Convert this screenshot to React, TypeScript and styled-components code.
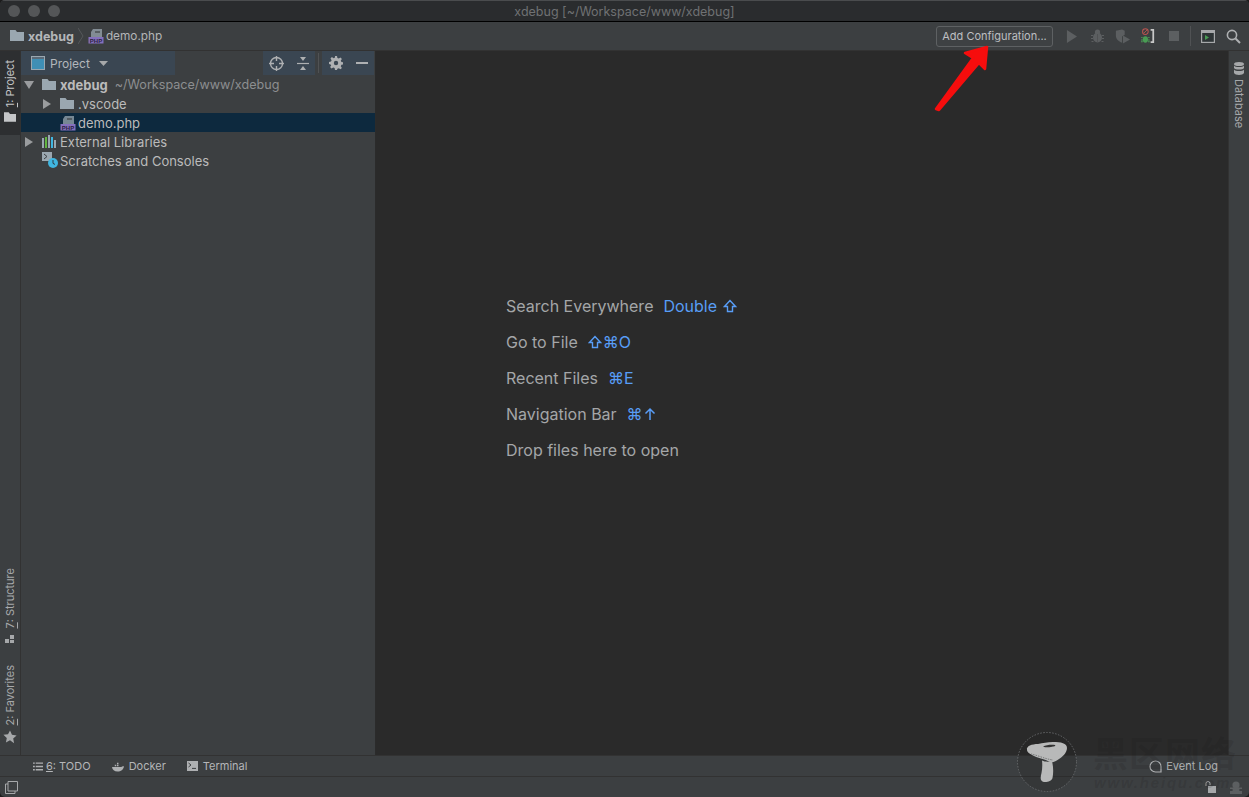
import React from "react"
import styled, { createGlobalStyle } from "styled-components"

const GlobalStyle = createGlobalStyle`
  html, body {
    margin: 0;
    padding: 0;
    height: 100%;
    background: #1c1c1c;
    overflow: hidden;
  }
  #root {
    height: 100%;
  }
`

const uiFont = `Inter, "Noto Sans", "Liberation Sans", sans-serif`

const Window = styled.div`
  position: relative;
  width: 1249px;
  height: 797px;
  display: flex;
  flex-direction: column;
  background: #3c3f41;
  color: #bbbbbb;
  font-family: ${uiFont};
  font-size: 13px;
  overflow: hidden;
  border-radius: 5px;
`

const TitleBar = styled.div`
  position: relative;
  height: 22px;
  flex: none;
  background: #2a2c2e;
  border-top: 1px solid #4a4c4e;
  border-bottom: 1px solid #000;
  box-sizing: border-box;
  display: flex;
  align-items: center;
  justify-content: center;
  color: #6f7173;
  font-size: 12.5px;
`

const Lights = styled.div`
  position: absolute;
  left: 8px;
  top: 4px;
  display: flex;
  gap: 8px;
`

const Light = styled.span`
  width: 12px;
  height: 12px;
  border-radius: 50%;
  background: #545658;
`

const NavBar = styled.div`
  height: 29px;
  box-sizing: border-box;
  flex: none;
  display: flex;
  align-items: center;
  padding-left: 10px;
  border-bottom: 1px solid #323232;
  svg {
    flex: none;
  }
`

const Crumb = styled.span<{ $bold?: boolean }>`
  font-weight: ${(p) => (p.$bold ? 700 : 400)};
  color: #b4b6b8;
  font-size: ${(p) => (p.$bold ? "12.5px" : "11.8px")};
  margin-left: ${(p) => (p.$bold ? "4px" : "2px")};
`

const CrumbChevron = styled.svg`
  margin: 0 4px;
`

const Spacer = styled.div`
  flex: 1;
`

const ConfigButton = styled.div`
  width: 117px;
  height: 21px;
  box-sizing: border-box;
  border: 1px solid #5e6163;
  border-radius: 3px;
  background: #3e4143;
  display: flex;
  align-items: center;
  justify-content: center;
  font-size: 11px;
  color: #bdbfc1;
  margin-right: 6px;
`

const ToolIcons = styled.div`
  display: flex;
  align-items: center;
  height: 100%;
  padding-right: 3px;
`

const ToolSlot = styled.span<{ $width?: number }>`
  width: ${(p) => p.$width ?? 25.5}px;
  flex: none;
  display: flex;
  align-items: center;
  justify-content: center;
`

const ToolDivider = styled.span`
  width: 1px;
  height: 20px;
  margin: 0 4px 0 3.5px;
  background: #505254;
`

const Main = styled.div`
  flex: 1;
  min-height: 0;
  display: flex;
`

const Stripe = styled.div<{ $side: "left" | "right" }>`
  width: 20px;
  flex: none;
  display: flex;
  flex-direction: column;
  border-${(p) => (p.$side === "left" ? "right" : "left")}: 1px solid #323232;
`

const StripeGap = styled.div`
  flex: 1;
`

const StripeTab = styled.div<{ $active?: boolean; $height: number; $down?: boolean; $pad: number }>`
  height: ${(p) => p.$height}px;
  display: flex;
  flex-direction: ${(p) => (p.$down ? "column" : "column-reverse")};
  align-items: center;
  justify-content: flex-start;
  gap: ${(p) => (p.$down ? 4 : 5)}px;
  padding: ${(p) => (p.$down ? `${p.$pad}px 0 0` : `0 0 ${p.$pad}px`)};
  box-sizing: border-box;
  background: ${(p) => (p.$active ? "#2d2f31" : "transparent")};
  color: ${(p) => (p.$active ? "#c4c6c8" : "#a6a8aa")};
  svg {
    flex: none;
  }
`

const StripeLabel = styled.span<{ $down?: boolean }>`
  writing-mode: vertical-rl;
  transform: ${(p) => (p.$down ? "none" : "rotate(180deg)")};
  font-size: 11px;
  white-space: nowrap;
  u {
    text-underline-offset: 1px;
  }
`

const ProjectPanel = styled.div`
  width: 354px;
  flex: none;
  display: flex;
  flex-direction: column;
  border-right: 1px solid #2b2b2b;
`

const PanelHeader = styled.div`
  height: 24px;
  flex: none;
  display: flex;
  align-items: stretch;
`

const PanelTitle = styled.div`
  width: 154px;
  background: #3a4652;
  display: flex;
  align-items: center;
  padding-left: 10px;
  box-sizing: border-box;
  gap: 5px;
  font-size: 12px;
  color: #b3b7bb;
`

const PanelActions = styled.div<{ $left: number }>`
  width: 52px;
  margin-left: ${(p) => p.$left}px;
  background: #3a4652;
  display: flex;
  align-items: center;
  justify-content: space-around;
`

const PanelDivider = styled.span`
  width: 1px;
  margin: 2px 3px;
  background: #505254;
`

const Tree = styled.div`
  display: flex;
  flex-direction: column;
`

const Row = styled.div<{ $indent: number; $selected?: boolean }>`
  height: 19px;
  display: flex;
  align-items: center;
  padding-left: ${(p) => p.$indent}px;
  background: ${(p) => (p.$selected ? "#0d293e" : "transparent")};
  color: #bbbbbb;
  white-space: nowrap;
  font-size: 13px;
`

const Arrow = styled.span`
  width: 18px;
  flex: none;
  display: flex;
  align-items: center;
`

const RowIcon = styled.span`
  width: 18px;
  height: 16px;
  flex: none;
  display: flex;
  align-items: center;
`

const RowPath = styled.span`
  color: #8c8e90;
  font-size: 12.6px;
  margin-left: 7px;
`

const Editor = styled.div`
  flex: 1;
  background: #2a2a2a;
  display: flex;
  flex-direction: column;
  padding: 245px 0 0 130px;
  box-sizing: border-box;
  gap: 16px;
`

const Hint = styled.div`
  display: flex;
  align-items: center;
  height: 20px;
  gap: 10px;
  font-size: 16px;
  color: #a4a6a8;
`

const Shortcut = styled.span`
  color: #589df6;
  display: inline-flex;
  align-items: center;
  gap: 1px;
`

const ToolBar = styled.div`
  height: 22px;
  flex: none;
  display: flex;
  align-items: center;
  padding-left: 33px;
  gap: 21px;
  border-top: 1px solid #323232;
  border-bottom: 1px solid #323232;
  box-sizing: border-box;
  font-size: 11px;
`

const ToolItem = styled.div<{ $gap?: number }>`
  display: flex;
  align-items: center;
  gap: ${(p) => p.$gap ?? 5}px;
  color: #b4b6b8;
  u {
    text-underline-offset: 1px;
  }
`

const EventLog = styled(ToolItem)`
  margin-left: auto;
  margin-right: 31px;
`

const StatusBar = styled.div`
  height: 20px;
  flex: none;
  display: flex;
  align-items: center;
  padding: 0 7px 0 5px;
  gap: 13px;
`

/* watermark and arrow sit over the page */
const Badge = styled.svg`
  position: absolute;
  left: 1016px;
  top: 731px;
`

const WatermarkCn = styled.div`
  position: absolute;
  left: 1093px;
  top: 731px;
  font-family: "Noto Sans CJK SC", sans-serif;
  font-weight: 700;
  font-size: 35px;
  line-height: 42px;
  letter-spacing: 1px;
  color: rgba(20, 20, 20, 0.14);
  white-space: nowrap;
`

const WatermarkUrl = styled.div`
  position: absolute;
  left: 1094px;
  top: 774px;
  font-family: "Liberation Sans", sans-serif;
  font-size: 15px;
  font-style: italic;
  font-weight: 700;
  letter-spacing: 1.8px;
  color: rgba(20, 20, 20, 0.14);
  white-space: nowrap;
`

const RedArrow = styled.svg`
  position: absolute;
  left: 930px;
  top: 42px;
`

const Folder = ({ size = 14 }: { size?: number }) => (
  <svg width={size} height={size * 0.8} viewBox="0 0 14 11">
    <path d="M0 0h5.5l1.5 2h7v9H0z" fill="#9aa7b0" />
  </svg>
)

const PhpFile = () => (
  <svg width="16" height="16" viewBox="0 0 16 16">
    <path d="M5 1h9v8H3V4z" fill="#9aa7b0" opacity=".75" />
    <path d="M7 3h5v2H7z" fill="#3c3f41" opacity=".6" />
    <rect x="0.5" y="9" width="15" height="6.5" fill="#8470bd" />
    <text x="8" y="14.6" textAnchor="middle" fontSize="6" fontWeight="700" fontFamily="Liberation Sans, sans-serif" fill="#2b2140">
      PHP
    </text>
  </svg>
)

const Triangle = ({ open }: { open?: boolean }) => (
  <svg width="10" height="10" viewBox="0 0 10 10">
    {open ? <path d="M0 1h10L5 9z" fill="#9a9c9e" /> : <path d="M1 0l8 5-8 5z" fill="#9a9c9e" />}
  </svg>
)

const Bug = ({ color }: { color: string }) => (
  <svg width="13" height="14" viewBox="0 0 13 14">
    <g fill={color}>
      <ellipse cx="6.5" cy="8.5" rx="4.5" ry="5" />
      <circle cx="6.5" cy="3" r="2.6" />
      <path d="M0 6h2v1H0zM11 6h2v1h-2zM0 9h2v1H0zM11 9h2v1h-2zM.5 12h2v1h-2zM10.500 12h2v1h-2z" />
    </g>
    <path d="M6.500 5v8" stroke="#4a4d4f" strokeWidth=".7" />
  </svg>
)

const ShiftGlyph = () => (
  <svg width="14" height="14" viewBox="0 0 14 14">
    <path d="M7 1.5L1.5 7.5H4.5V12.5H9.5V7.5H12.5z" fill="none" stroke="#589df6" strokeWidth="1.4" />
  </svg>
)

const UpGlyph = () => (
  <svg width="12" height="14" viewBox="0 0 12 14">
    <path d="M6 13V2M1.5 6.5L6 2l4.5 4.5" fill="none" stroke="#589df6" strokeWidth="1.5" />
  </svg>
)

export default function App() {
  return (
    <>
      <GlobalStyle />
      <Window>
        <TitleBar>
          <Lights>
            <Light />
            <Light />
            <Light />
          </Lights>
          xdebug [~/Workspace/www/xdebug]
        </TitleBar>
        <NavBar>
          <Folder />
          <Crumb $bold>xdebug</Crumb>
          <CrumbChevron width="6" height="16" viewBox="0 0 6 16">
            <path d="M0 0l5 8-5 8" fill="none" stroke="#55585a" />
          </CrumbChevron>
          <PhpFile />
          <Crumb>demo.php</Crumb>
          <Spacer />
          <ConfigButton>Add Configuration...</ConfigButton>
          <ToolIcons>
            <ToolSlot>
              <svg width="11" height="13" viewBox="0 0 12 14">
                <path d="M1 0l11 7-11 7z" fill="#5c5f61" />
              </svg>
            </ToolSlot>
            <ToolSlot>
              <Bug color="#5c5f61" />
            </ToolSlot>
            <ToolSlot>
              <svg width="15" height="15" viewBox="0 0 17 16">
                <path d="M1 1.5L8 0l3 1.5V6L8 8v7C4 14 1 11 1 7z" fill="#5c5f61" />
                <path d="M9 7l8 4.5-8 4.5z" fill="#5c5f61" />
              </svg>
            </ToolSlot>
            <ToolSlot>
              <svg width="14" height="16" viewBox="0 0 16 18">
                <circle cx="5" cy="4" r="3.2" fill="none" stroke="#b85450" strokeWidth="1.2" />
                <path d="M3 6l4-4" stroke="#b85450" strokeWidth="1" />
                <g fill="#499c54">
                  <ellipse cx="5" cy="13" rx="3" ry="3.6" />
                  <path d="M0 10h2v1H0zM8 10h2v1H8zM0 13h2v1H0zM8 13h2v1H8zM0 15h2v1H0zM8 15h2v1H8z" />
                </g>
                <path d="M11 2h3v14h-3" fill="none" stroke="#c8c8c8" strokeWidth="2" />
              </svg>
            </ToolSlot>
            <ToolSlot>
              <svg width="10" height="10" viewBox="0 0 11 11">
                <rect width="11" height="11" fill="#5c5f61" />
              </svg>
            </ToolSlot>
            <ToolDivider />
            <ToolSlot $width={25}>
              <svg width="14" height="13" viewBox="0 0 14 13">
                <rect x=".6" y=".6" width="12.8" height="11.8" fill="#2e3436" stroke="#a6a8aa" strokeWidth="1.2" />
                <rect x="0" y="0" width="14" height="3" fill="#a6a8aa" />
                <path d="M4 5l4 2.5L4 10z" fill="#499c54" />
              </svg>
            </ToolSlot>
            <ToolSlot $width={26}>
              <svg width="15" height="15" viewBox="0 0 15 15">
                <circle cx="6" cy="6" r="4.6" fill="none" stroke="#aeb0b2" strokeWidth="1.6" />
                <path d="M9.5 9.5L14 14" stroke="#aeb0b2" strokeWidth="2" />
              </svg>
            </ToolSlot>
          </ToolIcons>
        </NavBar>
        <Main>
          <Stripe $side="left">
            <StripeTab $active $height={84} $pad={13}>
              <svg width="12" height="10" viewBox="0 0 14 11">
                <path d="M0 0h5.5l1.5 2h7v9H0z" fill="#c4c6c8" />
              </svg>
              <StripeLabel>
                <u>1</u>: Project
              </StripeLabel>
            </StripeTab>
            <StripeGap />
            <StripeTab $height={90} $pad={13}>
              <svg width="10" height="10" viewBox="0 0 10 10">
                <path d="M0 5h4v4H0zM5 1h4v4H5zM5 6h4v3H5z" fill="#a6a8aa" />
              </svg>
              <StripeLabel>
                <u>7</u>: Structure
              </StripeLabel>
            </StripeTab>
            <StripeTab $height={98} $pad={11}>
              <svg width="14" height="14" viewBox="0 0 24 24">
                <path d="M12 1l3.4 7.3 7.9 1-5.8 5.4 1.5 7.8L12 17.6l-7 3.9 1.5-7.8L.7 8.3l7.9-1z" fill="#a6a8aa" />
              </svg>
              <StripeLabel>
                <u>2</u>: Favorites
              </StripeLabel>
            </StripeTab>
          </Stripe>
          <ProjectPanel>
            <PanelHeader>
              <PanelTitle>
                <svg width="14" height="14" viewBox="0 0 14 14">
                  <rect x=".5" y=".5" width="13" height="13" fill="#3f8fb5" stroke="#9aa7b0" />
                  <rect x="1" y="1" width="12" height="2" fill="#5a6a78" />
                </svg>
                Project
                <svg width="9" height="5" viewBox="0 0 9 5" style={{ marginLeft: 4 }}>
                  <path d="M0 0h9L4.5 5z" fill="#a6a8aa" />
                </svg>
              </PanelTitle>
              <PanelActions $left={88}>
                <svg width="15" height="15" viewBox="0 0 15 15">
                  <circle cx="7.5" cy="7.5" r="6" fill="none" stroke="#aeb0b2" strokeWidth="1.4" />
                  <path d="M7.5 0v5M7.5 10v5M0 7.5h5M10 7.5h5" stroke="#aeb0b2" strokeWidth="1.4" />
                </svg>
                <svg width="12" height="13" viewBox="0 0 12 13">
                  <path d="M0 6.5h12" stroke="#aeb0b2" strokeWidth="1.2" />
                  <path d="M3 0h6L6 4zM3 13h6l-3-4z" fill="#aeb0b2" />
                </svg>
              </PanelActions>
              <PanelDivider />
              <PanelActions $left={0}>
                <svg width="14" height="14" viewBox="0 0 14 14">
                  <path
                    d="M6 0h2l.4 2 1.4.6 1.7-1.1 1.4 1.4-1.1 1.7.6 1.4 2 .4v2l-2 .4-.6 1.4 1.1 1.7-1.4 1.4-1.7-1.1-1.4.6L8 14H6l-.4-2-1.4-.6-1.7 1.1-1.4-1.4 1.1-1.7L1.6 8.4 0 8V6l2-.4.6-1.4-1.1-1.7 1.4-1.4 1.7 1.1 1.4-.6z"
                    fill="#aeb0b2"
                  />
                  <circle cx="7" cy="7" r="2.2" fill="#3a4652" />
                </svg>
                <svg width="12" height="2" viewBox="0 0 12 2">
                  <rect width="12" height="2" fill="#aeb0b2" />
                </svg>
              </PanelActions>
            </PanelHeader>
            <Tree>
              <Row $indent={3}>
                <Arrow>
                  <Triangle open />
                </Arrow>
                <RowIcon>
                  <Folder />
                </RowIcon>
                <strong>xdebug</strong>
                <RowPath>~/Workspace/www/xdebug</RowPath>
              </Row>
              <Row $indent={21}>
                <Arrow>
                  <Triangle />
                </Arrow>
                <RowIcon>
                  <Folder />
                </RowIcon>
                .vscode
              </Row>
              <Row $indent={39} $selected>
                <RowIcon>
                  <PhpFile />
                </RowIcon>
                demo.php
              </Row>
              <Row $indent={3}>
                <Arrow>
                  <Triangle />
                </Arrow>
                <RowIcon>
                  <svg width="14" height="13" viewBox="0 0 14 13">
                    <path d="M0 3h2v10H0z" fill="#9aa7b0" />
                    <path d="M3 2h2v11H3z" fill="#62b543" />
                    <path d="M6 0h2v13H6z" fill="#9aa7b0" />
                    <path d="M9 2h2v11H9z" fill="#40b6e0" />
                    <path d="M12 5h2v8h-2z" fill="#9aa7b0" />
                  </svg>
                </RowIcon>
                External Libraries
              </Row>
              <Row $indent={21}>
                <RowIcon>
                  <svg width="17" height="17" viewBox="0 0 17 17">
                    <rect x="0" y="0" width="10" height="9" fill="#9aa7b0" />
                    <path d="M2 2l3 2.5L2 7" fill="none" stroke="#3c3f41" />
                    <circle cx="11" cy="11" r="5" fill="#40b6e0" />
                    <path d="M11 8v3.4l2 1" fill="none" stroke="#2b3a44" />
                  </svg>
                </RowIcon>
                Scratches and Consoles
              </Row>
            </Tree>
          </ProjectPanel>
          <Editor>
            <Hint>
              Search Everywhere
              <Shortcut>
                Double&nbsp;
                <ShiftGlyph />
              </Shortcut>
            </Hint>
            <Hint>
              Go to File
              <Shortcut>
                <ShiftGlyph />
                ⌘O
              </Shortcut>
            </Hint>
            <Hint>
              Recent Files
              <Shortcut>⌘E</Shortcut>
            </Hint>
            <Hint>
              Navigation Bar
              <Shortcut>
                ⌘
                <UpGlyph />
              </Shortcut>
            </Hint>
            <Hint>Drop files here to open</Hint>
          </Editor>
          <Stripe $side="right">
            <StripeTab $down $height={80} $pad={11}>
              <svg width="10" height="13" viewBox="0 0 10 13">
                <ellipse cx="5" cy="2" rx="5" ry="2" fill="#a6a8aa" />
                <path d="M0 3.5c1 2 9 2 10 0V6c-1 2-9 2-10 0zM0 7.5c1 2 9 2 10 0V11c-1 2.6-9 2.6-10 0z" fill="#a6a8aa" />
              </svg>
              <StripeLabel $down>Database</StripeLabel>
            </StripeTab>
          </Stripe>
        </Main>
        <ToolBar>
          <ToolItem $gap={3}>
            <svg width="10" height="9" viewBox="0 0 11 9">
              <path d="M0 0h2v1.6H0zM3 0h8v1.6H3zM0 3.6h2v1.6H0zM3 3.6h8v1.6H3zM0 7.2h2v1.6H0zM3 7.2h8v1.6H3z" fill="#aeb0b2" />
            </svg>
            <span>
              <u>6</u>: TODO
            </span>
          </ToolItem>
          <ToolItem>
            <svg width="12" height="11" viewBox="0 0 13 11">
              <path d="M0 6h10c1 0 1.5-1 3-.6C12.4 8.6 9.6 11 6 11 2.6 11 .4 9 0 6z" fill="#aeb0b2" />
              <path d="M3 3.6h1.6v1.6H3zM5.4 3.6H7v1.6H5.4zM5.4 1.4H7V3H5.4z" fill="#aeb0b2" />
            </svg>
            Docker
          </ToolItem>
          <ToolItem>
            <svg width="11" height="10" viewBox="0 0 11 10">
              <rect width="11" height="10" fill="#aeb0b2" />
              <path d="M1.5 2l2.5 2-2.5 2M5 7.4h4" fill="none" stroke="#3c3f41" />
            </svg>
            Terminal
          </ToolItem>
          <EventLog $gap={4}>
            <svg width="13" height="13" viewBox="0 0 13 13">
              <path d="M6.5 1a5.5 5.5 0 0 1 5.5 5.5V12H6.5a5.5 5.5 0 0 1 0-11z" fill="none" stroke="#aeb0b2" strokeWidth="1.2" />
            </svg>
            Event Log
          </EventLog>
        </ToolBar>
        <StatusBar>
          <svg width="13" height="13" viewBox="0 0 13 13">
            <path d="M3 .5h9.5V10H3zM3 3H.5v9.5H10V10" fill="none" stroke="#a6a8aa" />
          </svg>
          <Spacer />
          <svg width="12" height="12" viewBox="0 0 12 12">
            <rect x="3" y="5" width="8" height="7" fill="#a6a8aa" />
            <path d="M1 5V2.5a2 2 0 0 1 4 0V4" fill="none" stroke="#a6a8aa" />
          </svg>
          <svg width="12" height="13" viewBox="0 0 12 13">
            <circle cx="6" cy="4" r="3.6" fill="#5c5f61" />
            <path d="M0 6.5h12v1.4H9.4V10H12v3H0v-3h2.6V7.9H0z" fill="#5c5f61" />
          </svg>
        </StatusBar>
        <RedArrow width="60" height="72" viewBox="0 0 60 72">
          <path d="M6 67L43 16 35 11 57 5 55 27 49 21 9 68z" fill="#f60d0d" stroke="#f60d0d" strokeWidth="2.500" strokeLinejoin="round" />
        </RedArrow>
        <WatermarkCn>黑区网络</WatermarkCn>
        <WatermarkUrl>www.heiqu.com</WatermarkUrl>
        <Badge width="62" height="62" viewBox="0 0 62 62">
          <circle cx="31" cy="31" r="29.5" fill="rgba(30,30,30,0.25)" stroke="#66686a" strokeDasharray="1.5 1.5" />
          <path d="M11 19c-1-4 5-6 11-6 5-1 9-2 15-2 8 0 14 1 14 6 0 5-5 9-8 11-3 2-6 4-9 3-5-3-13-4-18-7-2-1-5-3-5-5z" fill="#b8b9b9" />
          <path d="M26 29.500c3 1.500 7 1.500 10 .5 1.500 6 1.500 12 .5 17-1 3.500-7 5-10 3.500-2.500-1-2-5-1-8.500 .8-4 1-8 .5-12.500z" fill="#b8b9b9" />
          <path d="M27 15.500c3-1.500 8-2 12-1.500 1 1-1 1.500-4 2-3 .5-6 .5-8-.5z" fill="#333" />
          <path d="M15 23c6 1 14 5 22 6" fill="none" stroke="#77797a" strokeDasharray="1.5 1" />
        </Badge>
      </Window>
    </>
  )
}
